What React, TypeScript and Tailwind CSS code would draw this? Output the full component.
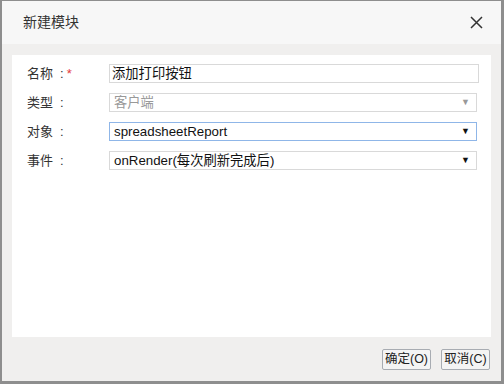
import React from "react";

const cjk = { fontFamily: '"Liberation Sans", "Noto Sans CJK SC", sans-serif' };

function Row({ label, star, children }: { label: string; star?: boolean; children: React.ReactNode }) {
  return (
    <div className="flex items-center h-[19px]">
      <div className="w-[97px] pl-[15px] text-[13px] text-[#333] leading-none flex items-center">
        <span>{label}</span>
        <span className="ml-[7px]">:</span>
        {star && <span className="text-[#e4393c] ml-[3px]">*</span>}
      </div>
      {children}
    </div>
  );
}

function Select({ text, focused, disabled }: { text: string; focused?: boolean; disabled?: boolean }) {
  return (
    <div
      className={`w-[368px] h-[19px] flex items-center justify-between pl-[4px] pr-[6px] bg-white border ${
        focused ? "border-[#8fb6e8]" : "border-[#d9d9d9]"
      }`}
    >
      <span className={`text-[13.3px] leading-none ${disabled ? "text-[#999]" : "text-[#111]"}`}>{text}</span>
      <span className={`text-[9px] leading-none ${disabled ? "text-[#999]" : "text-[#111]"}`}>▼</span>
    </div>
  );
}

export default function App() {
  return (
    <div className="w-[504px] h-[384px] bg-[#8e8e8e] pl-[2px] pt-[1px] overflow-hidden" style={cjk}>
      <div className="w-[499px] h-[380px] bg-[#f0efee] flex flex-col">
        <div className="h-[43px] bg-[#f7f7f7] flex items-center justify-between pl-[21px] pr-[18px]">
          <span className="text-[14px] text-[#333]">新建模块</span>
          <svg width="13" height="13" viewBox="0 0 13 13">
            <path d="M1 1 L12 12 M12 1 L1 12" stroke="#333" strokeWidth="1.5" />
          </svg>
        </div>
        <div className="flex-1 flex flex-col px-[10px] pt-[11px]">
          <div className="h-[282px] bg-white flex flex-col gap-[10px] pt-[9px]">
            <Row label="名称" star>
              <div className="w-[370px] h-[19px] border border-[#d9d9d9] flex items-center pl-[2px]">
                <span className="text-[13.3px] text-[#111] leading-none">添加打印按钮</span>
              </div>
            </Row>
            <Row label="类型">
              <Select text="客户端" disabled />
            </Row>
            <Row label="对象">
              <Select text="spreadsheetReport" focused />
            </Row>
            <Row label="事件">
              <Select text="onRender(每次刷新完成后)" />
            </Row>
          </div>
          <div className="flex justify-end gap-[10px] pt-[12px] pr-[1px]">
            <button className="h-[21px] w-[49px] border border-[#a8acb2] rounded-[2px] bg-[#f4f4f4] text-[12.5px] text-[#222] leading-none flex items-center justify-center">
              确定(O)
            </button>
            <button className="h-[21px] w-[49px] border border-[#a8acb2] rounded-[2px] bg-[#f4f4f4] text-[12.5px] text-[#222] leading-none flex items-center justify-center">
              取消(C)
            </button>
          </div>
        </div>
      </div>
    </div>
  );
}
